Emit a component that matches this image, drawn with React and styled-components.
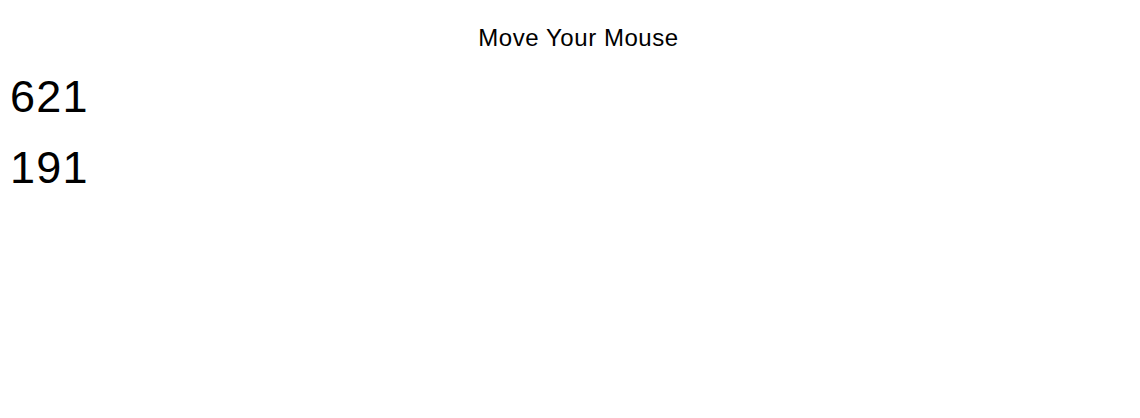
import React from "react";
import styled, { createGlobalStyle } from "styled-components";

const Global = createGlobalStyle`
  html, body { margin: 0; padding: 0; background: #ffffff; }
  body { font-family: "Liberation Sans", Arial, Helvetica, sans-serif; color: #000; }
`;

const Page = styled.div`
  display: flex;
  flex-direction: column;
  padding: 24px 0 0 0;
  min-height: 418px;
  box-sizing: border-box;
`;

const Title = styled.div`
  font-size: 24px;
  line-height: 28px;
  letter-spacing: 0.55px;
  text-align: center;
  padding-left: 17px;
  margin-bottom: 19px;
`;

const Coords = styled.div`
  display: flex;
  flex-direction: column;
  gap: 19px;
  padding-left: 10px;
`;

const Coord = styled.div`
  font-size: 45px;
  line-height: 52px;
  letter-spacing: 1.2px;
`;

export default function App() {
  const x = 621;
  const y = 191;
  return (
    <>
      <Global />
      <Page>
        <Title>Move Your Mouse</Title>
        <Coords>
          <Coord>{x}</Coord>
          <Coord>{y}</Coord>
        </Coords>
      </Page>
    </>
  );
}
